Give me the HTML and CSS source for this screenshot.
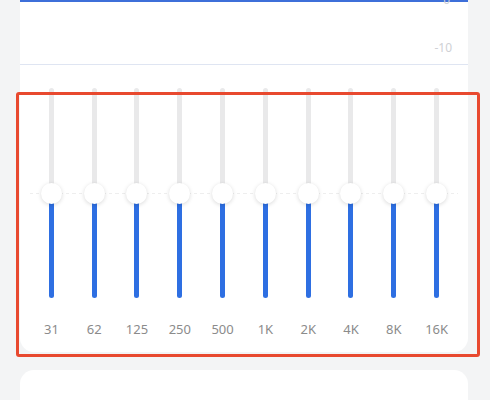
FILE: index.html
```html
<!DOCTYPE html>
<html lang="en">
<head>
    <meta charset="UTF-8">
    <meta name="viewport" content="width=device-width, initial-scale=1.0">
    <title>Equalizer</title>
    <link rel="stylesheet" href="styles.css">
</head>
<body>

    <div class="page">
        <!-- Curve + sliders card -->
        <div class="card eq-card">
            <div class="chart">
                <span class="axis axis-top">0</span>
                <span class="axis axis-low">-10</span>
            </div>

            <div class="bands">
                <div class="band"><div class="track"><span class="fill"></span><span class="thumb"></span></div><span class="freq">31</span></div>
                <div class="band"><div class="track"><span class="fill"></span><span class="thumb"></span></div><span class="freq">62</span></div>
                <div class="band"><div class="track"><span class="fill"></span><span class="thumb"></span></div><span class="freq">125</span></div>
                <div class="band"><div class="track"><span class="fill"></span><span class="thumb"></span></div><span class="freq">250</span></div>
                <div class="band"><div class="track"><span class="fill"></span><span class="thumb"></span></div><span class="freq">500</span></div>
                <div class="band"><div class="track"><span class="fill"></span><span class="thumb"></span></div><span class="freq">1K</span></div>
                <div class="band"><div class="track"><span class="fill"></span><span class="thumb"></span></div><span class="freq">2K</span></div>
                <div class="band"><div class="track"><span class="fill"></span><span class="thumb"></span></div><span class="freq">4K</span></div>
                <div class="band"><div class="track"><span class="fill"></span><span class="thumb"></span></div><span class="freq">8K</span></div>
                <div class="band"><div class="track"><span class="fill"></span><span class="thumb"></span></div><span class="freq">16K</span></div>
            </div>

            <!-- highlight frame -->
            <div class="highlight"></div>
        </div>

        <div class="card next-card"></div>
    </div>

</body>
</html>
```

FILE: styles.css
```css
/* General Reset */
* {
    margin: 0;
    padding: 0;
    box-sizing: border-box;
    font-family: "Noto Sans", "Roboto", sans-serif;
}

body {
    background: #f3f4f5;
    height: 400px;
    overflow: hidden;
}

.page {
    padding: 0 22px 0 20px;
}

/* Cards */
.card {
    background: #ffffff;
    border-radius: 0 0 14px 14px;
}

.eq-card {
    position: relative;
    height: 352px;
}

.next-card {
    margin-top: 18px;
    height: 60px;
    border-radius: 14px;
}

/* Chart */
.chart {
    height: 65px;
    border-top: 2px solid #3d6fd9;
    border-bottom: 1px solid #dfe5f2;
    display: flex;
    flex-direction: column;
    align-items: flex-end;
    padding-right: 16px;
}

.axis {
    font-size: 12px;
    line-height: 14px;
    color: #cfd1d5;
}

.axis-top {
    margin-top: -9px;
    margin-right: 2px;
}

.axis-low {
    margin-top: 34px;
}

/* Bands */
.bands {
    display: grid;
    grid-template-columns: repeat(10, 1fr);
    padding: 23px 10px 0 10px;
}

.band {
    display: flex;
    flex-direction: column;
    align-items: center;
}

.track {
    position: relative;
    width: 100%;
    height: 210px;
    display: flex;
    flex-direction: column;
    align-items: center;
    background: linear-gradient(to right, #eeeeee 50%, transparent 50%) 0 105px / 6px 1px repeat-x;
}

.track::before {
    content: "";
    width: 5px;
    height: 105px;
    border-radius: 3px 3px 0 0;
    background: #e9e9ea;
}

.fill {
    width: 5px;
    height: 105px;
    border-radius: 0 0 3px 3px;
    background: #2e6fe2;
}

.thumb {
    position: absolute;
    top: 95px;
    width: 21px;
    height: 21px;
    border-radius: 50%;
    background: #ffffff;
    box-shadow: 0 1px 4px rgba(0, 0, 0, 0.15);
}

.freq {
    margin-top: 23px;
    font-size: 13px;
    line-height: 16px;
    color: #8b8b8b;
}

/* Highlight frame */
.highlight {
    position: absolute;
    left: -4px;
    right: -12px;
    top: 92px;
    bottom: -5px;
    border: 3px solid #e8492f;
    border-radius: 3px;
    pointer-events: none;
}
```
